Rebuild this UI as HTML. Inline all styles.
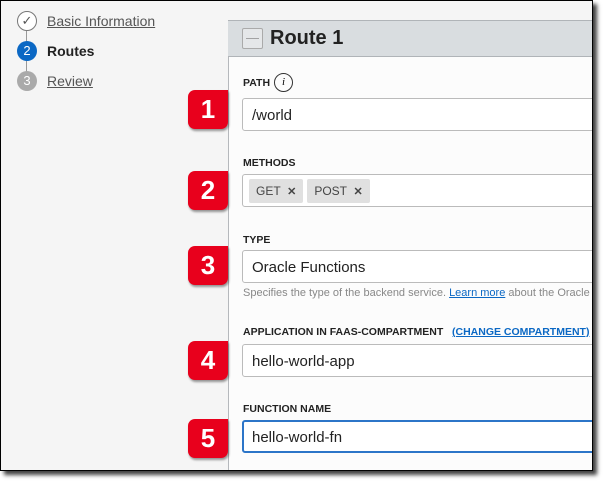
<!DOCTYPE html><html><head><style>
body{margin:0;width:603px;height:481px;background:#fff;font-family:"Liberation Sans",sans-serif;overflow:hidden;position:relative}
#frame{position:absolute;left:0;top:0;width:591px;height:469px;border:1px solid #000;background:#f5f5f5;overflow:hidden;box-shadow:4px 4px 4px rgba(0,0,0,.75)}
.a{position:absolute}
.step{position:absolute;left:16px;width:20px;height:20px;border-radius:50%;font-size:13px;color:#fff;text-align:center;line-height:20px}
.st{position:absolute;left:46px;font-size:14px;color:#555;text-decoration:underline}
#panel{position:absolute;left:227px;top:19px;width:380px;height:460px;background:#fcfcfc;border-left:1px solid #b5b8bc}
#hdr{position:absolute;left:227px;top:19px;width:370px;height:35px;background:#d9dde0;border-top:1px solid #b0b4b8;border-bottom:1px solid #b0b4b8}
.lbl{position:absolute;left:242px;font-size:10.5px;font-weight:bold;color:#222}
.inp{position:absolute;left:241px;width:360px;height:33px;border:1px solid #bbb;border-radius:3px;background:#fff;font-size:15px;color:#222;line-height:33px;padding-left:9px;box-sizing:border-box}
.b{position:absolute;left:187px;width:40px;height:39px;background:#e8001c;border-radius:7px 0 7px 7px;color:#fff;font-size:26px;font-weight:bold;text-align:center;line-height:39px;box-shadow:1px 2px 2px rgba(0,0,0,.4)}
.chip{display:inline-block;background:#e0e0e0;border-radius:2px;height:24px;line-height:24px;padding:0 7px;font-size:12px;color:#444;margin-right:4px;vertical-align:middle}
</style></head><body><div id="frame">
<div class="a" style="left:25px;top:30px;width:1px;height:50px;background:#999"></div>
<div class="step" style="top:10px;background:#fff;border:1px solid #777;width:18px;height:18px;color:#555;line-height:18px">✓</div>
<div class="st" style="top:12px">Basic Information</div>
<div class="step" style="top:40px;background:#0b68c4">2</div>
<div class="a" style="left:46px;top:42px;font-size:14px;font-weight:bold;color:#222">Routes</div>
<div class="step" style="top:70px;background:#aaa">3</div>
<div class="st" style="top:72px">Review</div>
<div id="panel"></div>
<div id="hdr"><div class="a" style="left:14px;top:7px;width:19px;height:19px;border:1px solid #aaa;border-radius:2px;background:#e5e7e9;color:#999;text-align:center;line-height:18px;font-size:13px">—</div><div class="a" style="left:42px;top:6px;font-size:20px;font-weight:bold;color:#222">Route 1</div></div>
<div class="lbl" style="top:76px">PATH</div><div class="a" style="left:273px;top:72px;width:17px;height:17px;border:1px solid #333;border-radius:50%;font-size:11px;font-style:italic;font-family:'Liberation Serif',serif;text-align:center;line-height:17px">i</div>
<div class="inp" style="top:97px">/world</div>
<div class="lbl" style="top:156px">METHODS</div>
<div class="inp" style="top:173px;padding-left:6px;line-height:31px"><span class="chip">GET &nbsp;<b style="font-size:11px">✕</b></span><span class="chip">POST &nbsp;<b style="font-size:11px">✕</b></span></div>
<div class="lbl" style="top:233px">TYPE</div>
<div class="inp" style="top:249px">Oracle Functions</div>
<div class="a" style="left:242px;top:286px;font-size:11px;color:#888;white-space:nowrap">Specifies the type of the backend service. <span style="color:#0b68c4;text-decoration:underline">Learn more</span> about the Oracle</div>
<div class="lbl" style="top:325px">APPLICATION IN FAAS-COMPARTMENT</div>
<div class="a" style="left:451px;top:325px;font-size:10.5px;font-weight:bold;color:#0b68c4;text-decoration:underline">(CHANGE COMPARTMENT)</div>
<div class="inp" style="top:343px">hello-world-app</div>
<div class="lbl" style="top:402px">FUNCTION NAME</div>
<div class="inp" style="top:419px;border:2px solid #2c75c8;padding-left:8px;line-height:31px">hello-world-fn</div>
<div class="b" style="top:89px">1</div>
<div class="b" style="top:170px">2</div>
<div class="b" style="top:245px">3</div>
<div class="b" style="top:340px">4</div>
<div class="b" style="top:418px">5</div>
</div></body></html>
